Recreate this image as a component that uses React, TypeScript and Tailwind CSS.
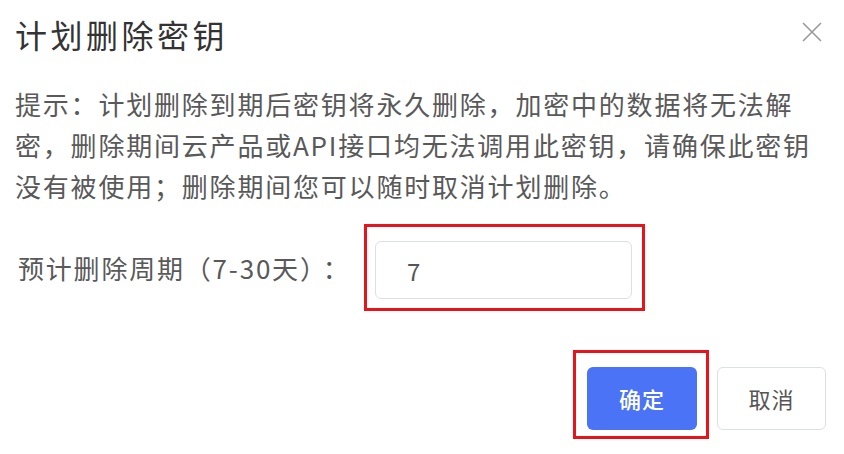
export default function App() {
  return (
    <div
      className="w-[844px] h-[454px] bg-white overflow-hidden flex flex-col"
      style={{ fontFamily: '"Noto Sans CJK SC", "Noto Sans", sans-serif' }}
    >
      {/* header */}
      <div className="flex items-start justify-between pl-[15px] pr-[22px] pt-[12px]">
        <h1 className="text-[32px] leading-[44px] tracking-[3.5px] text-[#333] font-normal">计划删除密钥</h1>
        <button className="mt-[10px] w-[20px] h-[20px] text-[#999]">
          <svg viewBox="0 0 20 20" width="20" height="20" fill="none" stroke="currentColor" strokeWidth="1.6">
            <path d="M1 1 L19 19 M19 1 L1 19" />
          </svg>
        </button>
      </div>

      {/* tip */}
      <div className="pl-[15px] mt-[27px] text-[26px] leading-[41px] tracking-[1.8px] text-[#595959]">
        <p>提示：计划删除到期后密钥将永久删除，加密中的数据将无法解</p>
        <p>密，删除期间云产品或API接口均无法调用此密钥，请确保此密钥</p>
        <p>没有被使用；删除期间您可以随时取消计划删除。</p>
      </div>

      {/* period */}
      <div className="flex items-center mt-[18px] pl-[18px]">
        <label className="w-[346px] text-[26px] tracking-[1.8px] text-[#595959]">
          预计删除周期（7-30天）<span className="ml-[8px]">：</span>
        </label>
        <div className="border-[3px] border-[#e8141c] pl-[8px] pr-[10px] pt-[14px] pb-[9px]">
          <input
            defaultValue="7"
            className="w-[257px] h-[58px] rounded-[6px] border border-[#dcdfe6] px-[31px] text-[24px] text-[#555] outline-none"
          />
        </div>
      </div>

      {/* actions */}
      <div className="flex items-start justify-end mt-[39px] pr-[18px]">
        <div className="border-[3px] border-[#e8141c] pl-[11px] pr-[9px] pt-[14px] pb-[6px]">
          <button className="w-[110px] h-[63px] rounded-[6px] bg-[#4a73f5] text-white text-[22px] font-medium tracking-[1px]">
            确定
          </button>
        </div>
        <button className="ml-[8px] mt-[17px] w-[109px] h-[63px] rounded-[6px] border border-[#dcdfe6] bg-white text-[#555] text-[22px] tracking-[1px]">
          取消
        </button>
      </div>
    </div>
  );
}
